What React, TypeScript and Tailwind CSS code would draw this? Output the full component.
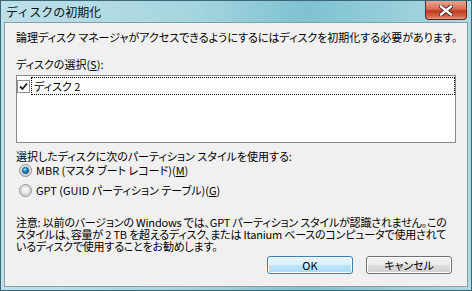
import React from "react";

const jp = "font-['Noto_Sans_CJK_JP','Liberation_Sans',sans-serif]";

function Radio({ checked }: { checked: boolean }) {
  return (
    <svg width="13" height="13" viewBox="0 0 13 13" className="shrink-0">
      <defs>
        <radialGradient id={checked ? "rg1" : "rg0"} cx="50%" cy="40%" r="60%">
          <stop offset="0%" stopColor="#ffffff" />
          <stop offset="100%" stopColor="#d4d4d4" />
        </radialGradient>
        <radialGradient id="dot" cx="40%" cy="35%" r="70%">
          <stop offset="0%" stopColor="#9fe3ff" />
          <stop offset="45%" stopColor="#1f8fd6" />
          <stop offset="100%" stopColor="#0b3f77" />
        </radialGradient>
      </defs>
      <circle cx="6.5" cy="6.5" r="6" fill={`url(#${checked ? "rg1" : "rg0"})`} stroke="#8e8f8f" strokeWidth="1" />
      <circle cx="6.5" cy="6.5" r="4.3" fill="none" stroke="#c9c9c9" strokeWidth="0.8" />
      {checked && <circle cx="6.5" cy="6.5" r="3.2" fill="url(#dot)" stroke="#1b4d7e" strokeWidth="0.6" />}
    </svg>
  );
}

export default function App() {
  return (
    <div className={`w-[472px] h-[291px] flex flex-col border border-[#3b6877] bg-[linear-gradient(90deg,#bde0e9_0%,#a6d5e0_40%,#7fc2d1_65%,#acd9e3_100%)] ${jp} text-[11px] text-black [font-feature-settings:'palt'] overflow-hidden whitespace-nowrap`}>
      <div className="h-[21px] flex items-start justify-between shrink-0">
        <div className="pl-[5px] pt-[3px] text-[12px] leading-[15px] [font-feature-settings:normal] text-[#101010]">ディスクの初期化</div>
        <div className="mr-[4px] w-[42px] h-[19px] rounded-b-[4px] border border-t-0 border-[#5b2a1e] bg-[linear-gradient(180deg,#e9a491_0%,#d96f55_45%,#c0391f_55%,#d2664a_85%,#e69a80_100%)] flex items-center justify-center">
          <svg width="14" height="11" viewBox="0 0 14 11">
            <path d="M2 1.5 L12 9.5 M12 1.5 L2 9.5" stroke="#3a1a14" strokeWidth="4.2" strokeLinecap="square" />
            <path d="M2 1.5 L12 9.5 M12 1.5 L2 9.5" stroke="#ffffff" strokeWidth="2.4" strokeLinecap="square" />
          </svg>
        </div>
      </div>
      <div className="flex-1 mx-[3px] mb-[3px] border border-[#8a9ea8] bg-[#f0f0f0] flex flex-col px-[11px] pt-[7px]">
        <div className="h-[14px] leading-[14px]">論理ディスク マネージャがアクセスできるようにするにはディスクを初期化する必要があります。</div>
        <div className="mt-[13px] h-[14px] leading-[14px]">ディスクの選択(<span className="underline">S</span>):</div>
        <div className="mt-[4px] h-[68px] border border-[#828790] bg-white pt-[1px]">
          <div className="flex items-center h-[18px]">
            <div className="w-[13px] h-[13px] border border-[#8f8f8f] bg-white flex items-center justify-center shrink-0">
              <svg width="9" height="9" viewBox="0 0 9 9">
                <path d="M1 4.5 L3.5 7 L8 1.5" fill="none" stroke="#1c1c1c" strokeWidth="1.8" />
              </svg>
            </div>
            <div className="ml-[1px] flex-1 h-full border border-dotted border-black leading-[16px] pl-[2px]">ディスク 2</div>
          </div>
        </div>
        <div className="mt-[7px] h-[13px] leading-[13px]">選択したディスクに次のパーティション スタイルを使用する:</div>
        <div className="pl-[3px] flex flex-col gap-[6px]">
          <div className="flex items-center gap-[4px] h-[14px] leading-[14px]">
            <Radio checked />
            <span>MBR (マスタ ブート レコード)(<span className="underline">M</span>)</span>
          </div>
          <div className="flex items-center gap-[4px] h-[14px] leading-[14px]">
            <Radio checked={false} />
            <span>GPT (GUID パーティション テーブル)(<span className="underline">G</span>)</span>
          </div>
        </div>
        <div className="mt-[19px] leading-[12px] tracking-[-0.2px]">
          <div>注意: 以前のバージョンの Windows では、GPT パーティション スタイルが認識されません。この</div>
          <div>スタイルは、容量が 2 TB を超えるディスク、または Itanium ベースのコンピュータで使用されて</div>
          <div>いるディスクで使用することをお勧めします。</div>
        </div>
        <div className="mt-[4px] flex justify-end gap-[13px] pr-[4px]">
          <button className="w-[86px] h-[18px] rounded-[3px] border border-[#3c7fb1] bg-[linear-gradient(180deg,#eaf6fd_0%,#d9f0fc_50%,#bee6fd_51%,#a7d9f5_100%)] shadow-[inset_0_0_0_1px_#fdfeff] text-[11px] leading-[16px]">OK</button>
          <button className="w-[86px] h-[18px] rounded-[3px] border border-[#707070] bg-[linear-gradient(180deg,#f2f2f2_0%,#ebebeb_50%,#dddddd_51%,#cfcfcf_100%)] shadow-[inset_0_0_0_1px_#fcfcfc] text-[11px] leading-[16px]">キャンセル</button>
        </div>
      </div>
    </div>
  );
}
